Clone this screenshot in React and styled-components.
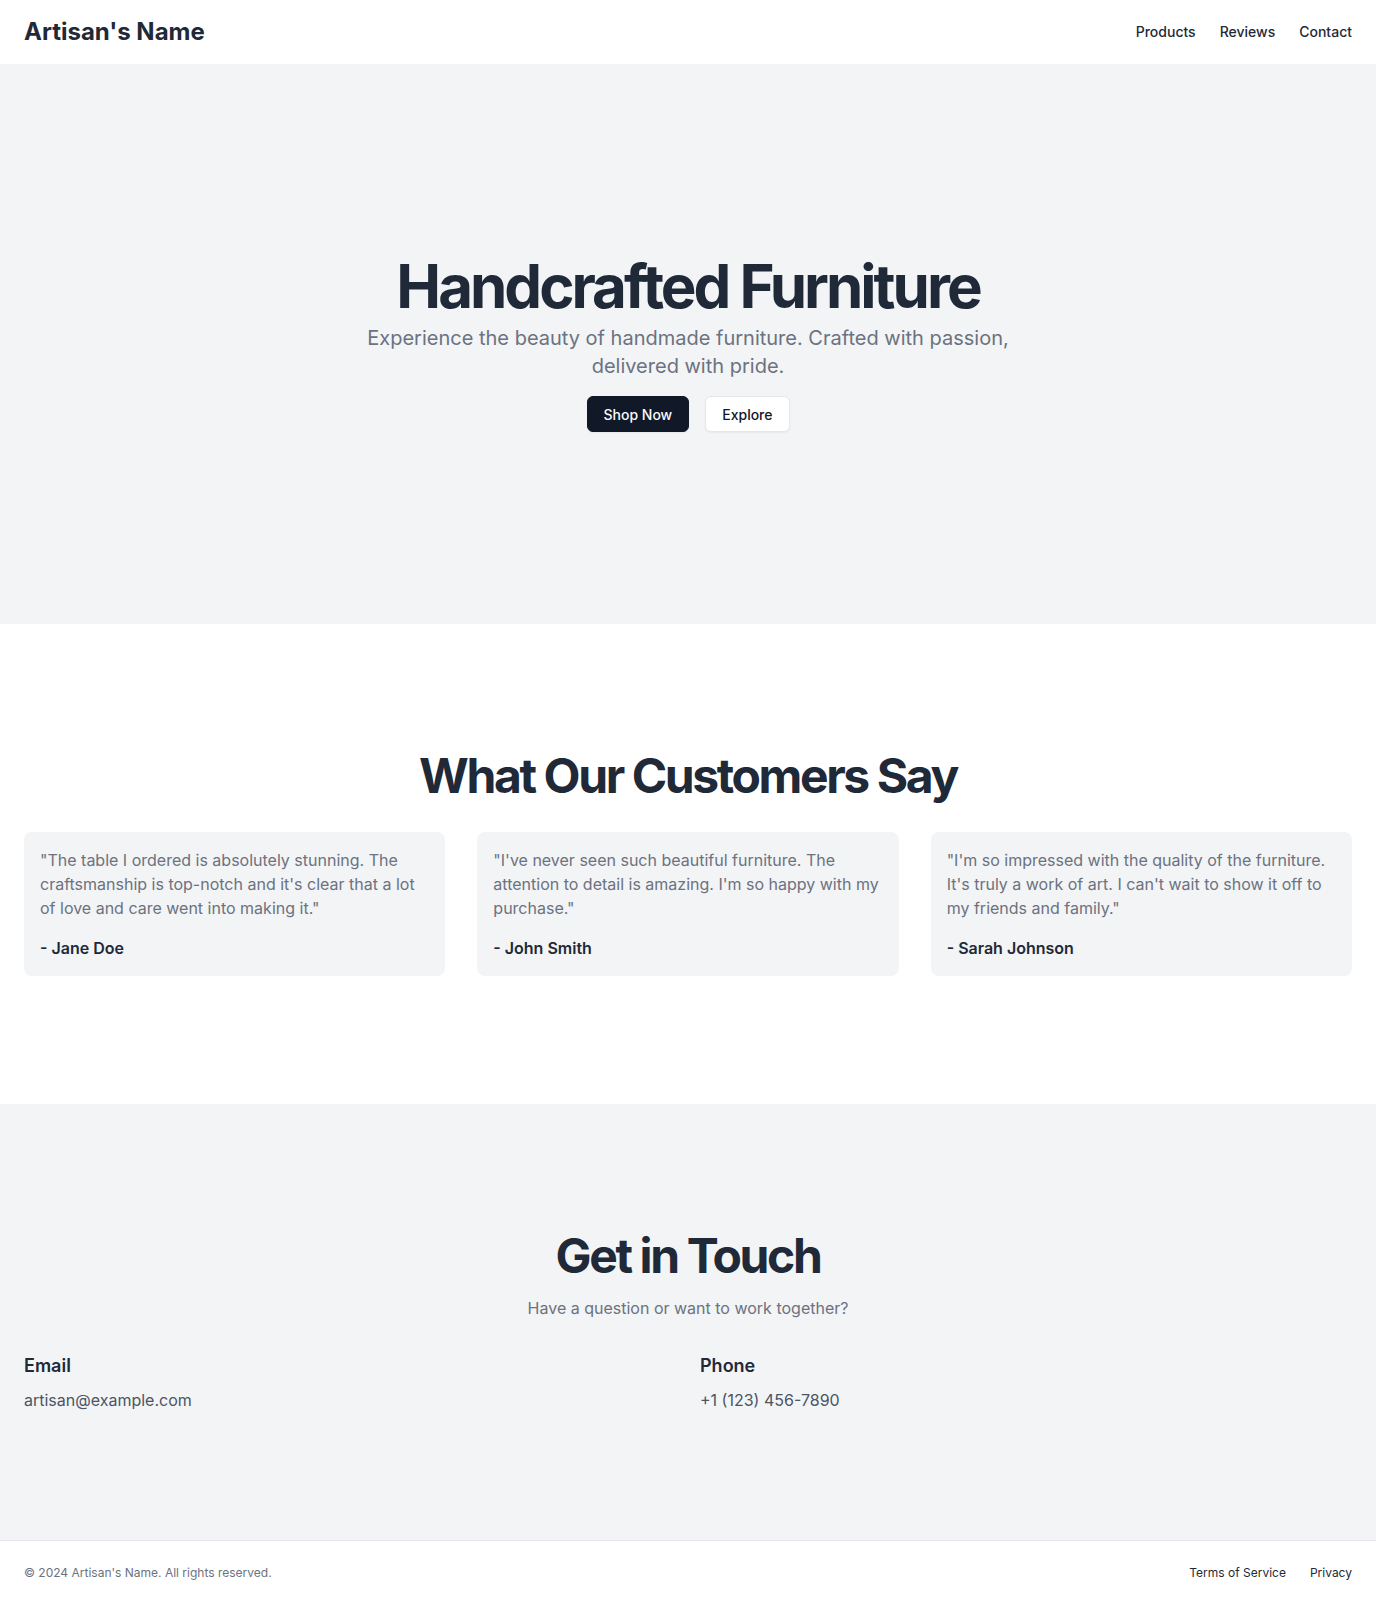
import React from "react";
import styled, { createGlobalStyle } from "styled-components";

const GlobalStyle = createGlobalStyle`
  *, *::before, *::after { box-sizing: border-box; }
  html, body { margin: 0; padding: 0; }
  body {
    font-family: Inter, "Noto Sans", "Liberation Sans", sans-serif;
    color: #1f2937;
    background: #ffffff;
    -webkit-font-smoothing: antialiased;
  }
  h1, h2, h3, p { margin: 0; }
  a { text-decoration: none; color: inherit; }
`;

const Page = styled.div`
  display: flex;
  flex-direction: column;
  min-height: 100vh;
`;

const Header = styled.header`
  height: 64px;
  padding: 0 24px;
  display: flex;
  align-items: center;
  justify-content: space-between;
  background: #ffffff;
`;

const Logo = styled.a`
  font-size: 24px;
  line-height: 32px;
  font-weight: 700;
  color: #1f2937;
`;

const Nav = styled.nav`
  display: flex;
  gap: 24px;
`;

const NavLink = styled.a`
  font-size: 14px;
  line-height: 20px;
  font-weight: 500;
  color: #1f2937;
`;

const Section = styled.section`
  padding: ${(p) => p.$pad || "128px"} 24px;
  background: ${(p) => (p.$muted ? "#f3f4f6" : "#ffffff")};
`;

const Center = styled.div`
  display: flex;
  flex-direction: column;
  align-items: center;
  text-align: center;
  gap: ${(p) => p.$gap || "16px"};
`;

const TitleBlock = styled.div`
  display: flex;
  flex-direction: column;
  align-items: center;
  gap: 8px;
`;

const HeroTitle = styled.h1`
  font-size: 60px;
  line-height: 60px;
  font-weight: 700;
  letter-spacing: -0.05em;
  color: #1f2937;
`;

const HeroText = styled.p`
  max-width: 700px;
  font-size: 20px;
  line-height: 28px;
  color: #6b7280;
`;

const Buttons = styled.div`
  display: flex;
  gap: 16px;
`;

const Button = styled.a`
  display: inline-flex;
  align-items: center;
  justify-content: center;
  height: 36px;
  padding: 0 16px;
  border-radius: 6px;
  font-size: 14px;
  font-weight: 500;
  background: ${(p) => (p.$primary ? "#111827" : "#ffffff")};
  color: ${(p) => (p.$primary ? "#f9fafb" : "#111827")};
  border: 1px solid ${(p) => (p.$primary ? "#111827" : "#e5e7eb")};
  box-shadow: 0 1px 2px rgba(0, 0, 0, 0.05);
`;

const SectionTitle = styled.h2`
  font-size: 48px;
  line-height: 48px;
  font-weight: 700;
  letter-spacing: -0.05em;
  color: #1f2937;
`;

const Cards = styled.div`
  display: grid;
  grid-template-columns: repeat(3, 1fr);
  gap: 32px;
  margin-top: 32px;
`;

const Card = styled.div`
  background: #f3f4f6;
  border-radius: 8px;
  padding: 16px;
  display: flex;
  flex-direction: column;
  gap: 16px;
`;

const Quote = styled.p`
  font-size: 16px;
  line-height: 24px;
  color: #6b7280;
`;

const Author = styled.p`
  font-size: 16px;
  line-height: 24px;
  font-weight: 600;
  color: #1f2937;
`;

const SubText = styled.p`
  font-size: 16px;
  line-height: 24px;
  color: #6b7280;
`;

const ContactGrid = styled.div`
  display: grid;
  grid-template-columns: 1fr 1fr;
  gap: 24px;
  margin-top: 32px;
`;

const ContactItem = styled.div`
  display: flex;
  flex-direction: column;
  gap: 8px;
`;

const ContactLabel = styled.h3`
  font-size: 18px;
  line-height: 28px;
  font-weight: 600;
  color: #1f2937;
`;

const ContactValue = styled.p`
  font-size: 16px;
  line-height: 24px;
  color: #4b5563;
`;

const Footer = styled.footer`
  border-top: 1px solid #e5e7eb;
  padding: 24px;
  display: flex;
  align-items: center;
  justify-content: space-between;
  background: #ffffff;
`;

const FooterText = styled.p`
  font-size: 12px;
  line-height: 16px;
  color: #6b7280;
`;

const FooterNav = styled.nav`
  display: flex;
  gap: 24px;
`;

const FooterLink = styled.a`
  font-size: 12px;
  line-height: 16px;
  color: #1f2937;
`;

const reviews = [
  {
    text: "\"The table I ordered is absolutely stunning. The craftsmanship is top-notch and it's clear that a lot of love and care went into making it.\"",
    name: "- Jane Doe",
  },
  {
    text: "\"I've never seen such beautiful furniture. The attention to detail is amazing. I'm so happy with my purchase.\"",
    name: "- John Smith",
  },
  {
    text: "\"I'm so impressed with the quality of the furniture. It's truly a work of art. I can't wait to show it off to my friends and family.\"",
    name: "- Sarah Johnson",
  },
];

export default function App() {
  return (
    <>
      <GlobalStyle />
      <Page>
        <Header>
          <Logo href="#">Artisan's Name</Logo>
          <Nav>
            <NavLink href="#">Products</NavLink>
            <NavLink href="#">Reviews</NavLink>
            <NavLink href="#">Contact</NavLink>
          </Nav>
        </Header>

        <Section $muted $pad="192px">
          <Center $gap="16px">
            <TitleBlock>
              <HeroTitle>Handcrafted Furniture</HeroTitle>
              <HeroText>
                Experience the beauty of handmade furniture. Crafted with passion, delivered with pride.
              </HeroText>
            </TitleBlock>
            <Buttons>
              <Button $primary href="#">Shop Now</Button>
              <Button href="#">Explore</Button>
            </Buttons>
          </Center>
        </Section>

        <Section>
          <Center>
            <SectionTitle>What Our Customers Say</SectionTitle>
          </Center>
          <Cards>
            {reviews.map((r) => (
              <Card key={r.name}>
                <Quote>{r.text}</Quote>
                <Author>{r.name}</Author>
              </Card>
            ))}
          </Cards>
        </Section>

        <Section $muted>
          <Center $gap="16px">
            <SectionTitle>Get in Touch</SectionTitle>
            <SubText>Have a question or want to work together?</SubText>
          </Center>
          <ContactGrid>
            <ContactItem>
              <ContactLabel>Email</ContactLabel>
              <ContactValue>artisan@example.com</ContactValue>
            </ContactItem>
            <ContactItem>
              <ContactLabel>Phone</ContactLabel>
              <ContactValue>+1 (123) 456-7890</ContactValue>
            </ContactItem>
          </ContactGrid>
        </Section>

        <Footer>
          <FooterText>© 2024 Artisan's Name. All rights reserved.</FooterText>
          <FooterNav>
            <FooterLink href="#">Terms of Service</FooterLink>
            <FooterLink href="#">Privacy</FooterLink>
          </FooterNav>
        </Footer>
      </Page>
    </>
  );
}
